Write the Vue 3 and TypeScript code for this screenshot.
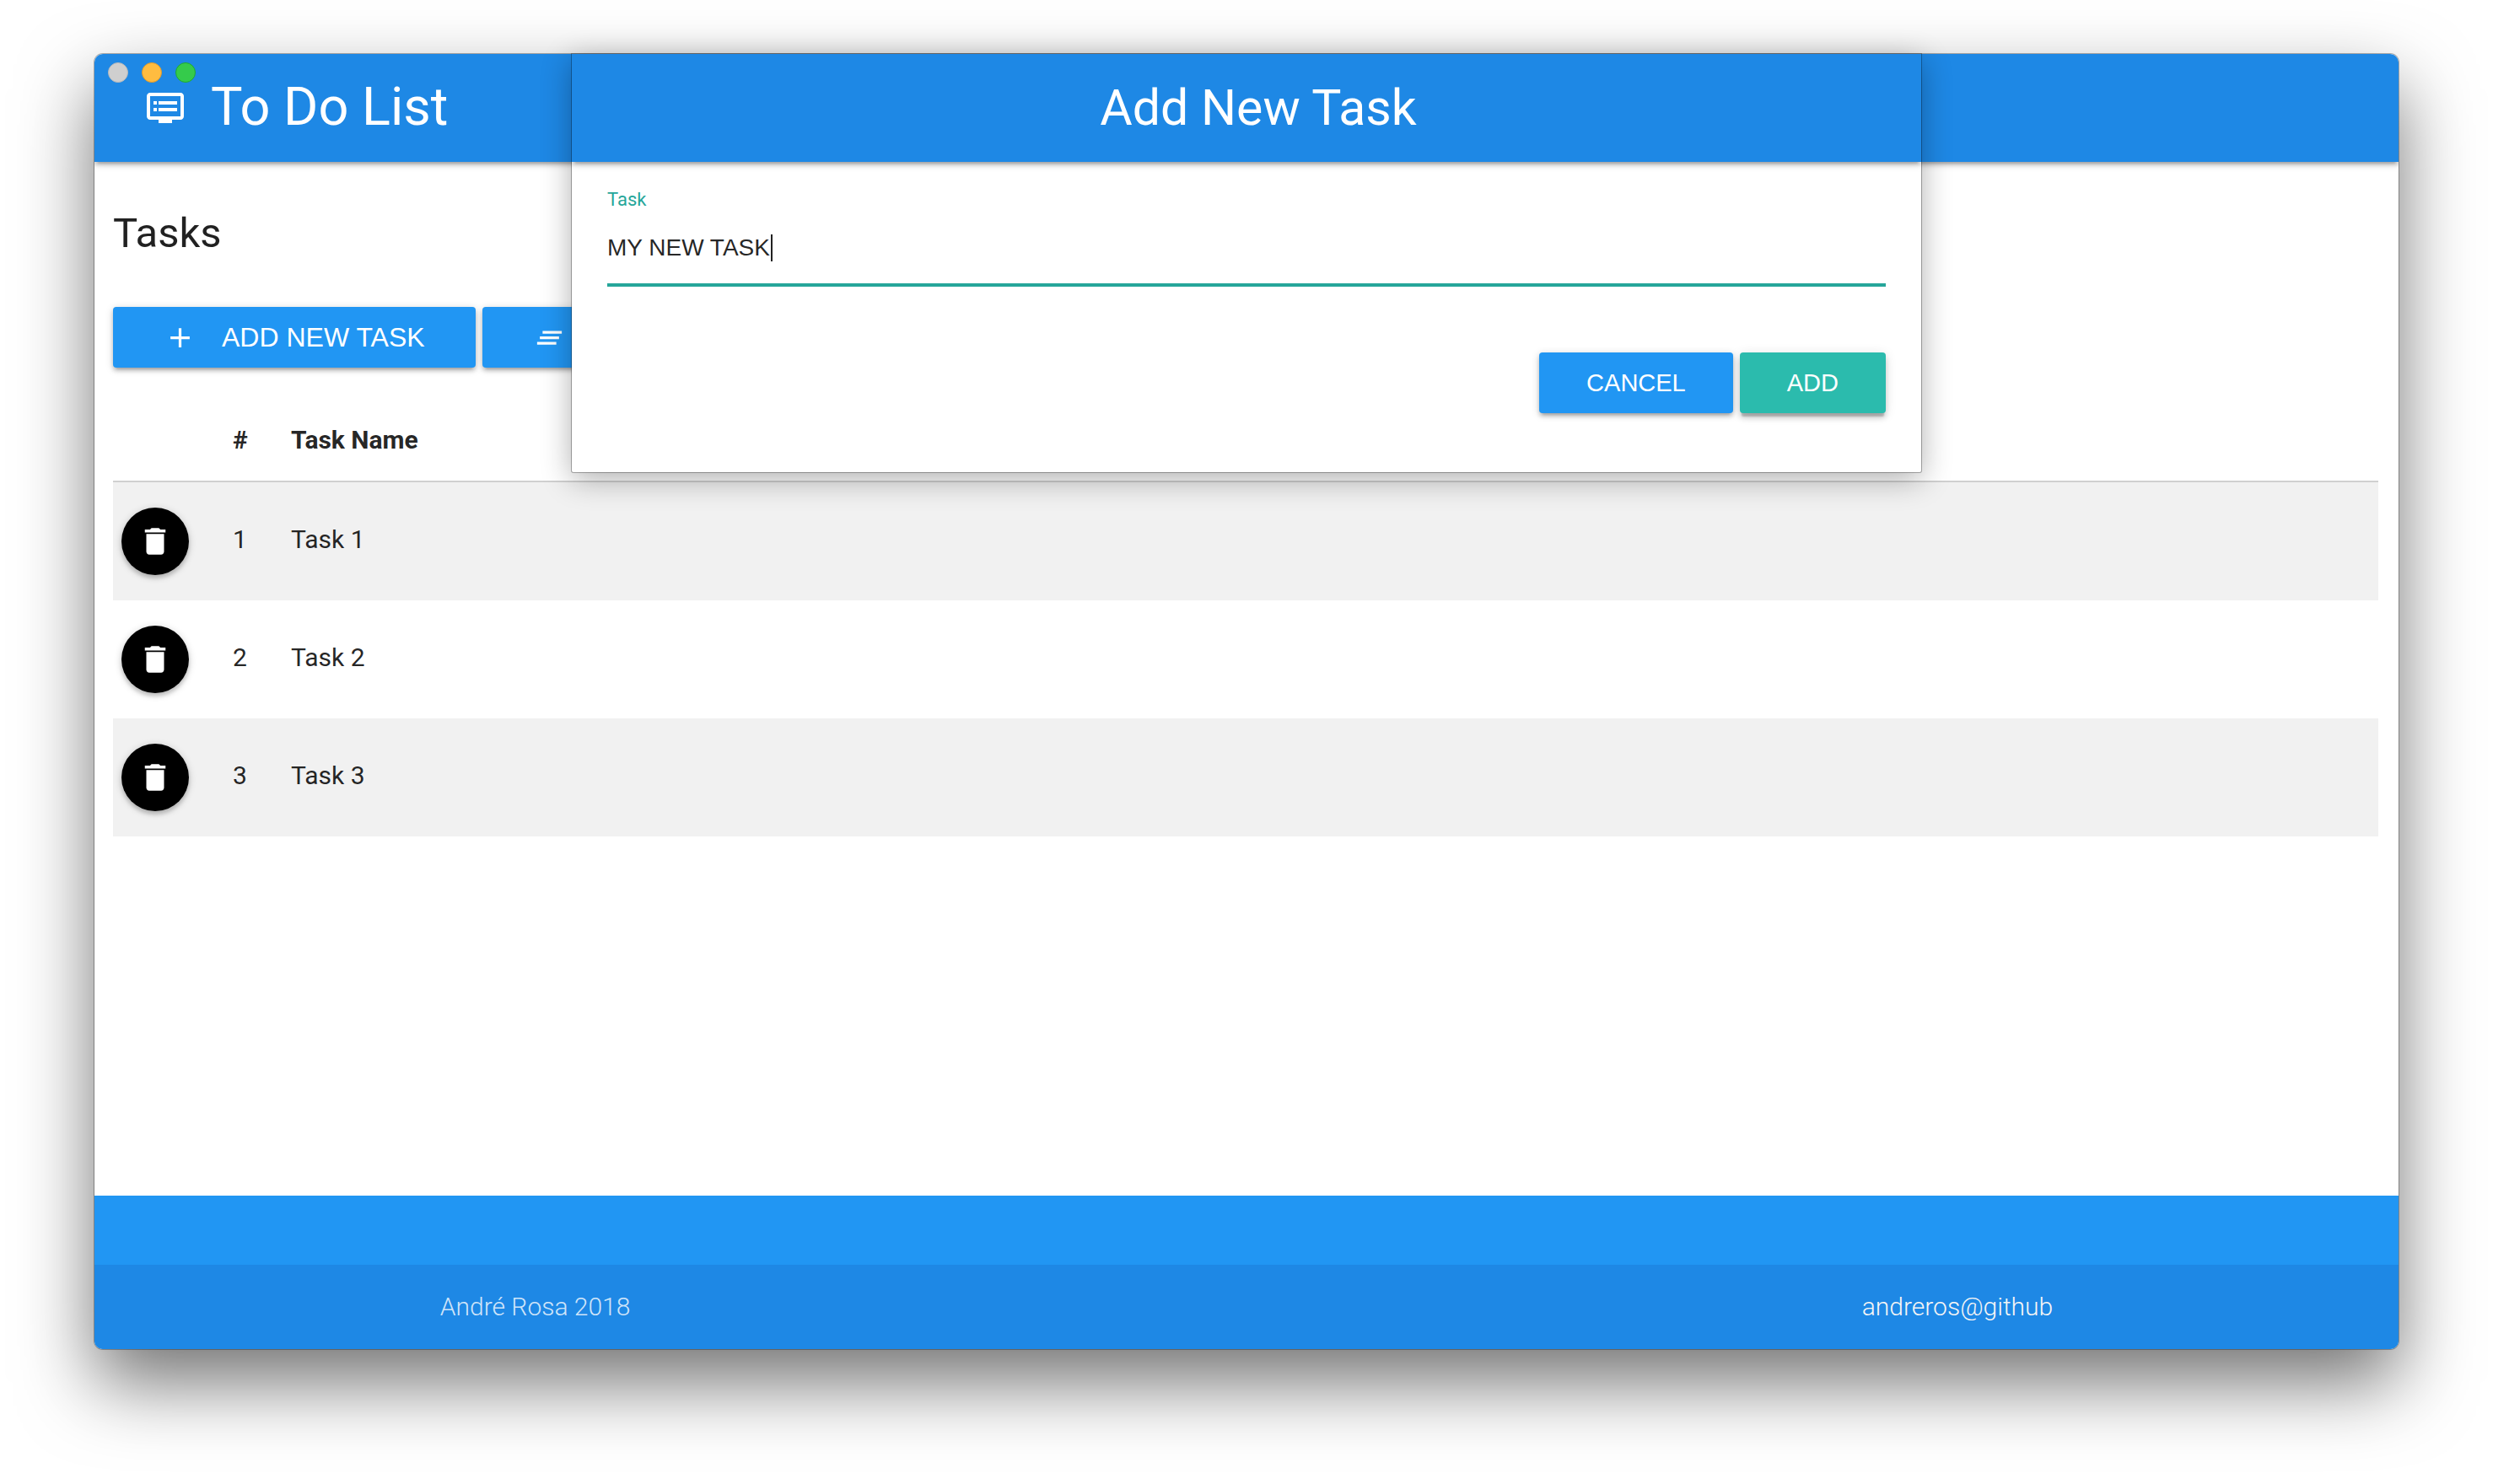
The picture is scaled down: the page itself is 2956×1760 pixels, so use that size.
<script setup lang="ts">
import { ref } from 'vue'

interface Task {
  id: number
  name: string
}

const tasks = ref<Task[]>([
  { id: 1, name: 'Task 1' },
  { id: 2, name: 'Task 2' },
  { id: 3, name: 'Task 3' },
])
const newTask = ref('MY NEW TASK')

function removeTask(id: number): void {
  tasks.value = tasks.value.filter((task) => task.id !== id)
}
</script>

<template>
  <div class="desktop">
    <div class="window">
      <div class="app">
        <header class="nav">
          <svg class="nav-icon" viewBox="0 0 24 24" aria-hidden="true">
            <path d="M21 3H3c-1.1 0-2 .9-2 2v12c0 1.1.9 2 2 2h5v2h8v-2h5c1.1 0 1.99-.9 1.99-2L23 5c0-1.1-.9-2-2-2zm0 14H3V5h18v12zm-2-9H8v2h11V8zm0 4H8v2h11v-2zM7 8H5v2h2V8zm0 4H5v2h2v-2z" />
          </svg>
          <h1 class="brand">To Do List</h1>
        </header>

        <main class="content">
          <h2 class="heading">Tasks</h2>
          <div class="toolbar">
            <button type="button" class="btn btn-page">
              <svg class="btn-icon" viewBox="0 0 24 24" aria-hidden="true">
                <path d="M19 13h-6v6h-2v-6H5v-2h6V5h2v6h6v2z" />
              </svg>
              <span>ADD NEW TASK</span>
            </button>
            <button type="button" class="btn btn-page btn-clear" aria-label="Clear all">
              <svg class="btn-icon" viewBox="0 0 24 24" aria-hidden="true">
                <path d="M5 13h14v-2H5v2zm-2 4h14v-2H3v2zM7 7v2h14V7H7z" />
              </svg>
            </button>
          </div>

          <table class="tasks">
            <colgroup>
              <col class="col-action" />
              <col class="col-number" />
              <col />
            </colgroup>
            <thead>
              <tr>
                <th></th>
                <th scope="col">#</th>
                <th scope="col">Task Name</th>
              </tr>
            </thead>
            <tbody>
              <tr v-for="task in tasks" :key="task.id">
                <td class="action">
                  <button type="button" class="fab" :aria-label="`Delete ${task.name}`" @click="removeTask(task.id)">
                    <svg class="fab-icon" viewBox="0 0 24 24" aria-hidden="true">
                      <path d="M6 19c0 1.1.9 2 2 2h8c1.1 0 2-.9 2-2V7H6v12zM19 4h-3.5l-1-1h-5l-1 1H5v2h14V4z" />
                    </svg>
                  </button>
                </td>
                <td>{{ task.id }}</td>
                <td>{{ task.name }}</td>
              </tr>
            </tbody>
          </table>
        </main>

        <footer class="footer">
          <div class="copyright">
            <div class="container">
              <span class="author">André Rosa 2018</span>
              <a class="github" href="#">andreros@github</a>
            </div>
          </div>
        </footer>
      </div>

      <div class="lights">
        <span class="light light-close"></span>
        <span class="light light-minimise"></span>
        <span class="light light-zoom"></span>
      </div>

      <section class="sheet" role="dialog" aria-labelledby="sheet-title">
        <header class="nav nav-sheet">
          <h2 id="sheet-title" class="sheet-title">Add New Task</h2>
        </header>
        <form class="form" @submit.prevent>
          <label class="label" for="task-name">Task</label>
          <div class="field">
            <input id="task-name" v-model="newTask" class="input" type="text" autocomplete="off" spellcheck="false" />
            <span class="caret"></span>
          </div>
          <div class="actions">
            <button type="button" class="btn">CANCEL</button>
            <button type="submit" class="btn btn-add">ADD</button>
          </div>
        </form>
      </section>
    </div>
  </div>
</template>

<style>
body {
  margin: 0;
  background: #fff;
}
</style>

<style scoped>
* {
  box-sizing: border-box;
}

.desktop {
  display: flex;
  min-height: 100vh;
  padding: 64px 112px 160px;
  overflow: hidden;
  color: rgba(0, 0, 0, 0.87);
  font-family: Roboto, sans-serif;
  font-size: 30px;
}

.window {
  position: relative;
  display: flex;
  flex: 1;
  border-radius: 10px;
  box-shadow: 0 0 0 1px rgba(0, 0, 0, 0.3), 0 40px 88px rgba(0, 0, 0, 0.55);
}

.app {
  display: flex;
  flex: 1;
  flex-direction: column;
  overflow: hidden;
  border-radius: 10px;
  background: #fff;
}

.nav {
  display: flex;
  align-items: center;
  height: 128px;
  padding: 0 60px;
  background: #1e88e5;
  box-shadow: 0 4px 4px rgba(0, 0, 0, 0.14), 0 6px 2px -4px rgba(0, 0, 0, 0.12), 0 2px 10px rgba(0, 0, 0, 0.2);
  color: #fff;
}

.nav-icon {
  width: 48px;
  height: 48px;
  margin-right: 30px;
  fill: currentColor;
}

.brand {
  margin: 0;
  padding-bottom: 2px;
  font-size: 63px;
  font-weight: 400;
  line-height: 72px;
}

.content {
  flex: 1;
  padding: 58px 24px 60px 22px;
}

.heading {
  margin: 0 0 60px;
  font-size: 49px;
  font-weight: 400;
  line-height: 54px;
}

.toolbar {
  display: flex;
  gap: 8px;
  margin-bottom: 38px;
}

.btn {
  display: flex;
  align-items: center;
  height: 72px;
  padding: 0 56px;
  border: 0;
  border-radius: 4px;
  background: #2196f3;
  box-shadow: 0 4px 4px rgba(0, 0, 0, 0.14), 0 6px 2px -4px rgba(0, 0, 0, 0.12), 0 2px 10px rgba(0, 0, 0, 0.2);
  color: #fff;
  font-family: "Liberation Sans", Arial, sans-serif;
  font-size: 29px;
  line-height: 36px;
  cursor: pointer;
}

.btn-page {
  gap: 30px;
  padding: 0 60px;
  font-size: 32px;
}

.btn-clear {
  width: 360px;
}

.btn-icon {
  width: 39px;
  height: 39px;
  fill: currentColor;
}

.tasks {
  width: 100%;
  border-collapse: separate;
  border-spacing: 0;
  table-layout: fixed;
  line-height: 36px;
  text-align: left;
}

.col-action {
  width: 132px;
}

.col-number {
  width: 69px;
}

th {
  padding: 30px 10px;
  border-bottom: 2px solid #d0d0d0;
  font-weight: 700;
}

td {
  height: 140px;
  padding: 0 10px 4px;
}

td.action {
  padding: 0 10px;
}

tbody tr:nth-child(odd) {
  background: #f1f1f1;
}

.fab {
  display: flex;
  align-items: center;
  justify-content: center;
  width: 80px;
  height: 80px;
  padding: 0;
  border: 0;
  border-radius: 50%;
  background: #000;
  box-shadow: 0 4px 4px rgba(0, 0, 0, 0.14), 0 2px 10px rgba(0, 0, 0, 0.2);
  color: #fff;
  cursor: pointer;
}

.fab-icon {
  width: 42px;
  height: 42px;
  fill: currentColor;
}

.footer {
  padding-top: 82px;
  background: #2196f3;
}

.copyright {
  background: #1e88e5;
}

.container {
  display: flex;
  align-items: center;
  justify-content: space-between;
  width: 70%;
  height: 100px;
  margin: 0 auto;
  padding-bottom: 2px;
  font-weight: 300;
}

.author {
  color: rgba(255, 255, 255, 0.8);
}

.github {
  color: #f5f5f5;
  text-decoration: none;
}

.lights {
  position: absolute;
  top: 10px;
  left: 16px;
  display: flex;
  gap: 16px;
}

.light {
  width: 24px;
  height: 24px;
  border: 1px solid #b9b9b9;
  border-radius: 50%;
  background: #cfcfcf;
}

.light-minimise {
  border-color: #e09a2b;
  background: #ffbc40;
}

.light-zoom {
  border-color: #1fa833;
  background: #35cb4b;
}

.sheet {
  position: absolute;
  top: 0;
  right: 0;
  left: 0;
  width: 1600px;
  max-width: 90%;
  margin: 0 auto;
  overflow: hidden;
  border-radius: 0 0 2px 2px;
  background: #fff;
  box-shadow: 0 0 0 1px rgba(0, 0, 0, 0.3), 0 8px 36px rgba(0, 0, 0, 0.32);
}

.nav-sheet {
  justify-content: center;
  padding: 0 0 0 28px;
}

.sheet-title {
  margin: 0;
  font-size: 59px;
  font-weight: 400;
  line-height: 72px;
}

.form {
  padding: 32px 42px 70px;
}

.label {
  display: block;
  color: #26a69a;
  font-size: 22px;
  line-height: 26px;
}

.field {
  position: relative;
}

.input {
  display: block;
  width: 100%;
  height: 90px;
  padding: 2px 0 0;
  border: 0;
  border-bottom: 4px solid #26a69a;
  outline: 0;
  background: transparent;
  caret-color: transparent;
  color: rgba(0, 0, 0, 0.87);
  font-family: "Liberation Sans", Arial, sans-serif;
  font-size: 28px;
}

.caret {
  position: absolute;
  top: 28px;
  left: 194px;
  width: 2px;
  height: 32px;
  background: #212121;
}

.actions {
  display: flex;
  justify-content: flex-end;
  gap: 8px;
  margin-top: 78px;
}

.btn-add {
  background: #2bbbad;
  box-shadow: 0 6px 6px rgba(0, 0, 0, 0.14), 0 2px 14px rgba(0, 0, 0, 0.12), 0 6px 2px -2px rgba(0, 0, 0, 0.2);
}
</style>
